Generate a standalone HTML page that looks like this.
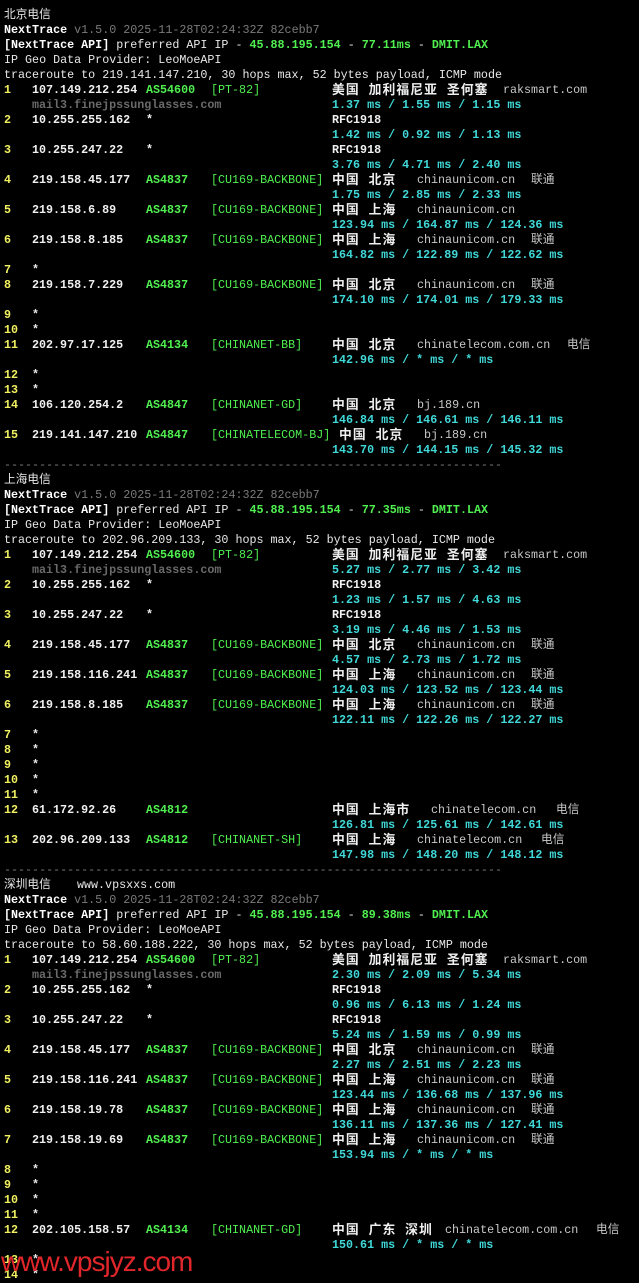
<!DOCTYPE html>
<html><head><meta charset="utf-8"><style>
body{margin:0;background:#000;width:639px;height:1280px;overflow:hidden;position:relative;font-family:"Liberation Mono","Noto Sans CJK SC",monospace;font-size:11.7px;color:#e8e8e8}
#w{position:absolute;left:0;top:2px;width:639px;height:1280px}
.l{position:absolute;left:0;height:15px;line-height:15px;white-space:pre;width:639px}
.l span{position:absolute;top:0}
.n{left:4px;color:#f0f060;font-weight:bold}
.ip{left:32px;font-weight:bold;color:#f0f0f0}
.as{left:146px;color:#50f050;font-weight:bold}
.tg{left:211px;color:#50f050}
.g{left:332px;font-weight:bold;color:#f0f0f0;font-size:12.8px;letter-spacing:1.1px}
.r{left:332px;font-weight:bold;color:#f0f0f0}
.d{color:#c8c8c8}
.c{left:332px;color:#40d8d8;font-weight:bold}
.m{left:32px;color:#6a6a6a;font-weight:bold}
.s{left:32px;font-weight:bold}
.gr{color:#7a7a7a}
.gn{color:#50f050;font-weight:bold}
.b{font-weight:bold;color:#fff}
.t{left:4px}
.wm{position:absolute;left:1px;top:1246px;font-family:"Liberation Sans",sans-serif;font-size:28px;color:#e0262a;letter-spacing:-1px}
</style></head><body>
<div id="w">
<!-- Section 1 -->
<div class="l" style="top:6px"><span class="t">北京电信</span></div>
<div class="l" style="top:21px"><span class="t"><b class="b">NextTrace</b> <span class="gr" style="position:static">v1.5.0 2025-11-28T02:24:32Z 82cebb7</span></span></div>
<div class="l" style="top:36px"><span class="t"><b class="b">[NextTrace API]</b> preferred API IP - <span class="gn" style="position:static">45.88.195.154</span> - <span class="gn" style="position:static">77.11ms</span> - <span class="gn" style="position:static">DMIT.LAX</span></span></div>
<div class="l" style="top:51px"><span class="t">IP Geo Data Provider: LeoMoeAPI</span></div>
<div class="l" style="top:66px"><span class="t">traceroute to 219.141.147.210, 30 hops max, 52 bytes payload, ICMP mode</span></div>
<div class="l" style="top:81px"><span class="n">1</span><span class="ip">107.149.212.254</span><span class="as">AS54600</span><span class="tg">[PT-82]</span><span class="g">美国 加利福尼亚 圣何塞</span><span class="d" style="left:503px">raksmart.com</span></div>
<div class="l" style="top:96px"><span class="m">mail3.finejpssunglasses.com</span><span class="c">1.37 ms / 1.55 ms / 1.15 ms</span></div>
<div class="l" style="top:111px"><span class="n">2</span><span class="ip">10.255.255.162</span><span class="ip" style="left:146px">*</span><span class="r">RFC1918</span></div>
<div class="l" style="top:126px"><span class="c">1.42 ms / 0.92 ms / 1.13 ms</span></div>
<div class="l" style="top:141px"><span class="n">3</span><span class="ip">10.255.247.22</span><span class="ip" style="left:146px">*</span><span class="r">RFC1918</span></div>
<div class="l" style="top:156px"><span class="c">3.76 ms / 4.71 ms / 2.40 ms</span></div>
<div class="l" style="top:171px"><span class="n">4</span><span class="ip">219.158.45.177</span><span class="as">AS4837</span><span class="tg">[CU169-BACKBONE]</span><span class="g">中国 北京</span><span class="d" style="left:417px">chinaunicom.cn</span><span class="d" style="left:531px">联通</span></div>
<div class="l" style="top:186px"><span class="c">1.75 ms / 2.85 ms / 2.33 ms</span></div>
<div class="l" style="top:201px"><span class="n">5</span><span class="ip">219.158.6.89</span><span class="as">AS4837</span><span class="tg">[CU169-BACKBONE]</span><span class="g">中国 上海</span><span class="d" style="left:417px">chinaunicom.cn</span></div>
<div class="l" style="top:216px"><span class="c">123.94 ms / 164.87 ms / 124.36 ms</span></div>
<div class="l" style="top:231px"><span class="n">6</span><span class="ip">219.158.8.185</span><span class="as">AS4837</span><span class="tg">[CU169-BACKBONE]</span><span class="g">中国 上海</span><span class="d" style="left:417px">chinaunicom.cn</span><span class="d" style="left:531px">联通</span></div>
<div class="l" style="top:246px"><span class="c">164.82 ms / 122.89 ms / 122.62 ms</span></div>
<div class="l" style="top:261px"><span class="n">7</span><span class="s">*</span></div>
<div class="l" style="top:276px"><span class="n">8</span><span class="ip">219.158.7.229</span><span class="as">AS4837</span><span class="tg">[CU169-BACKBONE]</span><span class="g">中国 北京</span><span class="d" style="left:417px">chinaunicom.cn</span><span class="d" style="left:531px">联通</span></div>
<div class="l" style="top:291px"><span class="c">174.10 ms / 174.01 ms / 179.33 ms</span></div>
<div class="l" style="top:306px"><span class="n">9</span><span class="s">*</span></div>
<div class="l" style="top:321px"><span class="n">10</span><span class="s">*</span></div>
<div class="l" style="top:336px"><span class="n">11</span><span class="ip">202.97.17.125</span><span class="as">AS4134</span><span class="tg">[CHINANET-BB]</span><span class="g">中国 北京</span><span class="d" style="left:417px">chinatelecom.com.cn</span><span class="d" style="left:567px">电信</span></div>
<div class="l" style="top:351px"><span class="c">142.96 ms / * ms / * ms</span></div>
<div class="l" style="top:366px"><span class="n">12</span><span class="s">*</span></div>
<div class="l" style="top:381px"><span class="n">13</span><span class="s">*</span></div>
<div class="l" style="top:396px"><span class="n">14</span><span class="ip">106.120.254.2</span><span class="as">AS4847</span><span class="tg">[CHINANET-GD]</span><span class="g">中国 北京</span><span class="d" style="left:417px">bj.189.cn</span></div>
<div class="l" style="top:411px"><span class="c">146.84 ms / 146.61 ms / 146.11 ms</span></div>
<div class="l" style="top:426px"><span class="n">15</span><span class="ip">219.141.147.210</span><span class="as">AS4847</span><span class="tg">[CHINATELECOM-BJ]</span><span class="g" style="left:339px">中国 北京</span><span class="d" style="left:424px">bj.189.cn</span></div>
<div class="l" style="top:441px"><span class="c">143.70 ms / 144.15 ms / 145.32 ms</span></div>
<div class="l" style="top:456px"><span class="t gr">-----------------------------------------------------------------------</span></div>

<!-- Section 2 -->
<div class="l" style="top:471px"><span class="t">上海电信</span></div>
<div class="l" style="top:486px"><span class="t"><b class="b">NextTrace</b> <span class="gr" style="position:static">v1.5.0 2025-11-28T02:24:32Z 82cebb7</span></span></div>
<div class="l" style="top:501px"><span class="t"><b class="b">[NextTrace API]</b> preferred API IP - <span class="gn" style="position:static">45.88.195.154</span> - <span class="gn" style="position:static">77.35ms</span> - <span class="gn" style="position:static">DMIT.LAX</span></span></div>
<div class="l" style="top:516px"><span class="t">IP Geo Data Provider: LeoMoeAPI</span></div>
<div class="l" style="top:531px"><span class="t">traceroute to 202.96.209.133, 30 hops max, 52 bytes payload, ICMP mode</span></div>
<div class="l" style="top:546px"><span class="n">1</span><span class="ip">107.149.212.254</span><span class="as">AS54600</span><span class="tg">[PT-82]</span><span class="g">美国 加利福尼亚 圣何塞</span><span class="d" style="left:503px">raksmart.com</span></div>
<div class="l" style="top:561px"><span class="m">mail3.finejpssunglasses.com</span><span class="c">5.27 ms / 2.77 ms / 3.42 ms</span></div>
<div class="l" style="top:576px"><span class="n">2</span><span class="ip">10.255.255.162</span><span class="ip" style="left:146px">*</span><span class="r">RFC1918</span></div>
<div class="l" style="top:591px"><span class="c">1.23 ms / 1.57 ms / 4.63 ms</span></div>
<div class="l" style="top:606px"><span class="n">3</span><span class="ip">10.255.247.22</span><span class="ip" style="left:146px">*</span><span class="r">RFC1918</span></div>
<div class="l" style="top:621px"><span class="c">3.19 ms / 4.46 ms / 1.53 ms</span></div>
<div class="l" style="top:636px"><span class="n">4</span><span class="ip">219.158.45.177</span><span class="as">AS4837</span><span class="tg">[CU169-BACKBONE]</span><span class="g">中国 北京</span><span class="d" style="left:417px">chinaunicom.cn</span><span class="d" style="left:531px">联通</span></div>
<div class="l" style="top:651px"><span class="c">4.57 ms / 2.73 ms / 1.72 ms</span></div>
<div class="l" style="top:666px"><span class="n">5</span><span class="ip">219.158.116.241</span><span class="as">AS4837</span><span class="tg">[CU169-BACKBONE]</span><span class="g">中国 上海</span><span class="d" style="left:417px">chinaunicom.cn</span><span class="d" style="left:531px">联通</span></div>
<div class="l" style="top:681px"><span class="c">124.03 ms / 123.52 ms / 123.44 ms</span></div>
<div class="l" style="top:696px"><span class="n">6</span><span class="ip">219.158.8.185</span><span class="as">AS4837</span><span class="tg">[CU169-BACKBONE]</span><span class="g">中国 上海</span><span class="d" style="left:417px">chinaunicom.cn</span><span class="d" style="left:531px">联通</span></div>
<div class="l" style="top:711px"><span class="c">122.11 ms / 122.26 ms / 122.27 ms</span></div>
<div class="l" style="top:726px"><span class="n">7</span><span class="s">*</span></div>
<div class="l" style="top:741px"><span class="n">8</span><span class="s">*</span></div>
<div class="l" style="top:756px"><span class="n">9</span><span class="s">*</span></div>
<div class="l" style="top:771px"><span class="n">10</span><span class="s">*</span></div>
<div class="l" style="top:786px"><span class="n">11</span><span class="s">*</span></div>
<div class="l" style="top:801px"><span class="n">12</span><span class="ip">61.172.92.26</span><span class="as">AS4812</span><span class="g">中国 上海市</span><span class="d" style="left:431px">chinatelecom.cn</span><span class="d" style="left:556px">电信</span></div>
<div class="l" style="top:816px"><span class="c">126.81 ms / 125.61 ms / 142.61 ms</span></div>
<div class="l" style="top:831px"><span class="n">13</span><span class="ip">202.96.209.133</span><span class="as">AS4812</span><span class="tg">[CHINANET-SH]</span><span class="g">中国 上海</span><span class="d" style="left:417px">chinatelecom.cn</span><span class="d" style="left:541px">电信</span></div>
<div class="l" style="top:846px"><span class="c">147.98 ms / 148.20 ms / 148.12 ms</span></div>
<div class="l" style="top:861px"><span class="t gr">-----------------------------------------------------------------------</span></div>

<!-- Section 3 -->
<div class="l" style="top:876px"><span class="t">深圳电信</span><span style="left:77px">www.vpsxxs.com</span></div>
<div class="l" style="top:891px"><span class="t"><b class="b">NextTrace</b> <span class="gr" style="position:static">v1.5.0 2025-11-28T02:24:32Z 82cebb7</span></span></div>
<div class="l" style="top:906px"><span class="t"><b class="b">[NextTrace API]</b> preferred API IP - <span class="gn" style="position:static">45.88.195.154</span> - <span class="gn" style="position:static">89.38ms</span> - <span class="gn" style="position:static">DMIT.LAX</span></span></div>
<div class="l" style="top:921px"><span class="t">IP Geo Data Provider: LeoMoeAPI</span></div>
<div class="l" style="top:936px"><span class="t">traceroute to 58.60.188.222, 30 hops max, 52 bytes payload, ICMP mode</span></div>
<div class="l" style="top:951px"><span class="n">1</span><span class="ip">107.149.212.254</span><span class="as">AS54600</span><span class="tg">[PT-82]</span><span class="g">美国 加利福尼亚 圣何塞</span><span class="d" style="left:503px">raksmart.com</span></div>
<div class="l" style="top:966px"><span class="m">mail3.finejpssunglasses.com</span><span class="c">2.30 ms / 2.09 ms / 5.34 ms</span></div>
<div class="l" style="top:981px"><span class="n">2</span><span class="ip">10.255.255.162</span><span class="ip" style="left:146px">*</span><span class="r">RFC1918</span></div>
<div class="l" style="top:996px"><span class="c">0.96 ms / 6.13 ms / 1.24 ms</span></div>
<div class="l" style="top:1011px"><span class="n">3</span><span class="ip">10.255.247.22</span><span class="ip" style="left:146px">*</span><span class="r">RFC1918</span></div>
<div class="l" style="top:1026px"><span class="c">5.24 ms / 1.59 ms / 0.99 ms</span></div>
<div class="l" style="top:1041px"><span class="n">4</span><span class="ip">219.158.45.177</span><span class="as">AS4837</span><span class="tg">[CU169-BACKBONE]</span><span class="g">中国 北京</span><span class="d" style="left:417px">chinaunicom.cn</span><span class="d" style="left:531px">联通</span></div>
<div class="l" style="top:1056px"><span class="c">2.27 ms / 2.51 ms / 2.23 ms</span></div>
<div class="l" style="top:1071px"><span class="n">5</span><span class="ip">219.158.116.241</span><span class="as">AS4837</span><span class="tg">[CU169-BACKBONE]</span><span class="g">中国 上海</span><span class="d" style="left:417px">chinaunicom.cn</span><span class="d" style="left:531px">联通</span></div>
<div class="l" style="top:1086px"><span class="c">123.44 ms / 136.68 ms / 137.96 ms</span></div>
<div class="l" style="top:1101px"><span class="n">6</span><span class="ip">219.158.19.78</span><span class="as">AS4837</span><span class="tg">[CU169-BACKBONE]</span><span class="g">中国 上海</span><span class="d" style="left:417px">chinaunicom.cn</span><span class="d" style="left:531px">联通</span></div>
<div class="l" style="top:1116px"><span class="c">136.11 ms / 137.36 ms / 127.41 ms</span></div>
<div class="l" style="top:1131px"><span class="n">7</span><span class="ip">219.158.19.69</span><span class="as">AS4837</span><span class="tg">[CU169-BACKBONE]</span><span class="g">中国 上海</span><span class="d" style="left:417px">chinaunicom.cn</span><span class="d" style="left:531px">联通</span></div>
<div class="l" style="top:1146px"><span class="c">153.94 ms / * ms / * ms</span></div>
<div class="l" style="top:1161px"><span class="n">8</span><span class="s">*</span></div>
<div class="l" style="top:1176px"><span class="n">9</span><span class="s">*</span></div>
<div class="l" style="top:1191px"><span class="n">10</span><span class="s">*</span></div>
<div class="l" style="top:1206px"><span class="n">11</span><span class="s">*</span></div>
<div class="l" style="top:1221px"><span class="n">12</span><span class="ip">202.105.158.57</span><span class="as">AS4134</span><span class="tg">[CHINANET-GD]</span><span class="g">中国 广东 深圳</span><span class="d" style="left:445px">chinatelecom.com.cn</span><span class="d" style="left:596px">电信</span></div>
<div class="l" style="top:1236px"><span class="c">150.61 ms / * ms / * ms</span></div>
<div class="l" style="top:1251px"><span class="n">13</span><span class="s">*</span></div>
<div class="l" style="top:1266px"><span class="n">14</span><span class="s">*</span></div>
</div>
<div class="wm">www.vpsjyz.com</div>
</body></html>
